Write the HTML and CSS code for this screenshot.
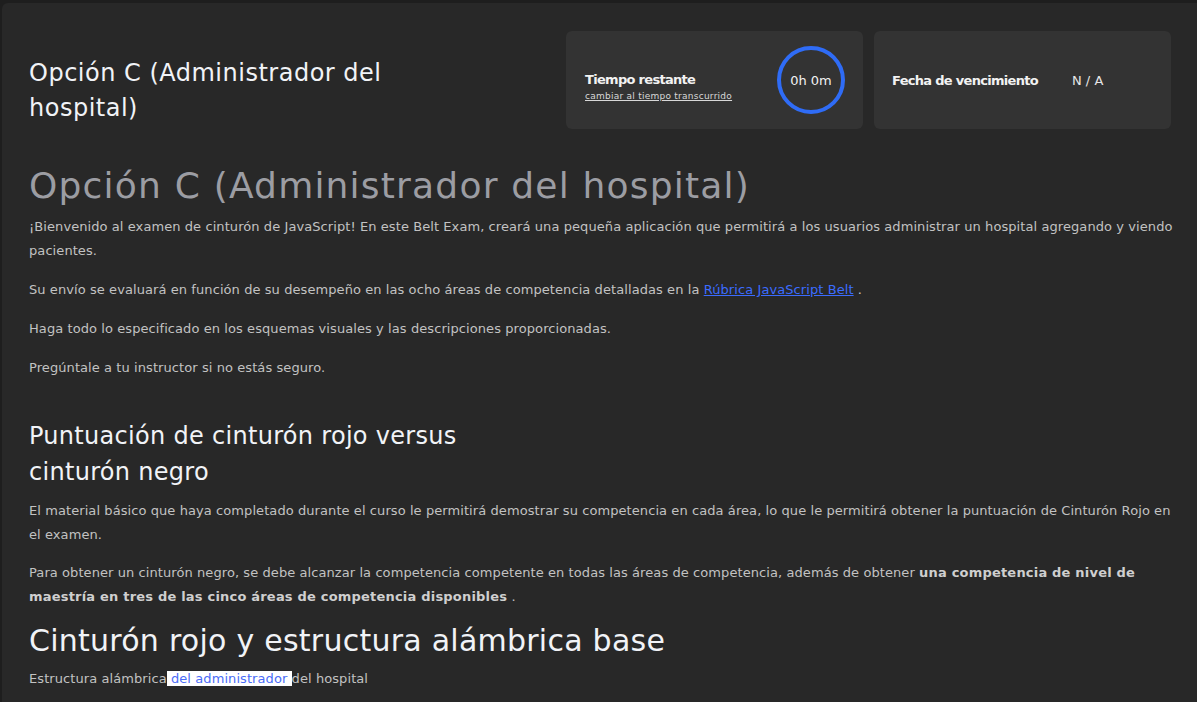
FILE: index.html
```html
<!DOCTYPE html>
<html lang="es">
<head>
<meta charset="utf-8">
<title>Opción C (Administrador del hospital)</title>
<link rel="stylesheet" href="styles.css">
</head>
<body>
<div class="panel">
  <header class="top">
    <h1 class="title">Opción C (Administrador del<br>hospital)</h1>
    <div class="cards">
      <div class="card card-time">
        <div class="card-text">
          <div class="card-label">Tiempo restante</div>
          <a class="card-link" href="#">cambiar al tiempo transcurrido</a>
        </div>
        <div class="ring">0h 0m</div>
      </div>
      <div class="card card-date">
        <div class="card-label">Fecha de vencimiento</div>
        <div class="card-value">N / A</div>
      </div>
    </div>
  </header>

  <main class="content">
    <h2 class="big-heading">Opción C (Administrador del hospital)</h2>
    <p class="p1">¡Bienvenido al examen de cinturón de JavaScript! En este Belt Exam, creará una pequeña aplicación que permitirá a los usuarios administrar un hospital agregando y viendo pacientes.</p>
    <p class="p2">Su envío se evaluará en función de su desempeño en las ocho áreas de competencia detalladas en la <a href="#" class="link">Rúbrica JavaScript Belt</a> .</p>
    <p class="p3">Haga todo lo especificado en los esquemas visuales y las descripciones proporcionadas.</p>
    <p class="p4">Pregúntale a tu instructor si no estás seguro.</p>

    <h3 class="sub-heading">Puntuación de cinturón rojo versus<br>cinturón negro</h3>
    <p class="p5">El material básico que haya completado durante el curso le permitirá demostrar su competencia en cada área, lo que le permitirá obtener la puntuación de Cinturón Rojo en el&nbsp;examen.</p>
    <p class="p6">Para obtener un cinturón negro, se debe alcanzar la competencia competente en todas las áreas de competencia, además de obtener <strong>una competencia de nivel de maestría en tres de las cinco áreas de competencia disponibles</strong> .</p>

    <h2 class="section-heading">Cinturón rojo y estructura alámbrica base</h2>
    <p class="p7">Estructura alámbrica<span class="mark"> del administrador </span>del hospital</p>
  </main>
</div>
</body>
</html>
```

FILE: styles.css
```css
* { box-sizing: border-box; }

html, body {
  margin: 0;
  padding: 0;
  background: #1e1e1e;
}

body {
  font-family: "DejaVu Sans", "Noto Sans", sans-serif;
  color: #c4c4c4;
  padding: 3px 0 0 2px;
  height: 702px;
  overflow: hidden;
}

.panel {
  background: #282828;
  border-top-left-radius: 6px;
  padding: 28px 19px 0 27px;
  min-height: 699px;
}

.top {
  display: flex;
  justify-content: space-between;
  align-items: flex-start;
  padding-right: 7px;
}

.title {
  margin: 25px 0 0 0;
  font-size: 24px;
  line-height: 35px;
  font-weight: 500;
  color: #f1f3f7;
  letter-spacing: 0.5px;
}

.cards {
  display: flex;
  gap: 11px;
}

.card {
  width: 297px;
  height: 98px;
  background: #333333;
  border-radius: 6px;
  display: flex;
  align-items: center;
}

.card-time {
  justify-content: space-between;
  padding: 0 18px 0 19px;
}

.card-text {
  margin-top: 12px;
}

.card-date {
  padding: 0 18px;
  gap: 34px;
}

.card-label {
  font-size: 13px;
  font-weight: 700;
  color: #f2f2f2;
  letter-spacing: -0.7px;
}

.card-link {
  display: block;
  margin-top: 4px;
  font-size: 9px;
  color: #d8d8d8;
  text-decoration: underline;
  letter-spacing: 0.25px;
}

.ring {
  width: 68px;
  height: 68px;
  border: 4px solid #2f6cf6;
  border-radius: 50%;
  display: flex;
  align-items: center;
  justify-content: center;
  font-size: 13px;
  color: #f2f2f2;
}

.card-value {
  font-size: 13px;
  color: #e6e6e6;
  margin-top: 1px;
}

.big-heading {
  margin: 35px 0 0 0;
  font-size: 36px;
  line-height: 43px;
  font-weight: 400;
  color: #9c9da3;
  letter-spacing: 1.2px;
}

.content p {
  font-size: 13px;
  line-height: 24px;
  margin: 15px 0 0 0;
  color: #c2c2c2;
  letter-spacing: 0.08px;
}

.content p.p1 { margin-top: 8px; }
.content p.p5 { margin-top: 9px; }
.content p.p6 { margin-top: 14px; }
.content p.p7 { margin-top: 6px; }

.link {
  color: #3b6cff;
  text-decoration: underline;
}

strong {
  font-weight: 700;
  color: #cfcfcf;
  letter-spacing: 0.2px;
}

.sub-heading {
  margin: 38px 0 0 0;
  font-size: 24px;
  line-height: 36px;
  font-weight: 500;
  color: #f1f3f7;
  letter-spacing: 0.3px;
}

.section-heading {
  margin: 12px 0 0 0;
  font-size: 30px;
  line-height: 40px;
  font-weight: 500;
  color: #f1f3f7;
  letter-spacing: 0.25px;
}

.mark {
  background: #ffffff;
  color: #4a6cf7;
}
```
